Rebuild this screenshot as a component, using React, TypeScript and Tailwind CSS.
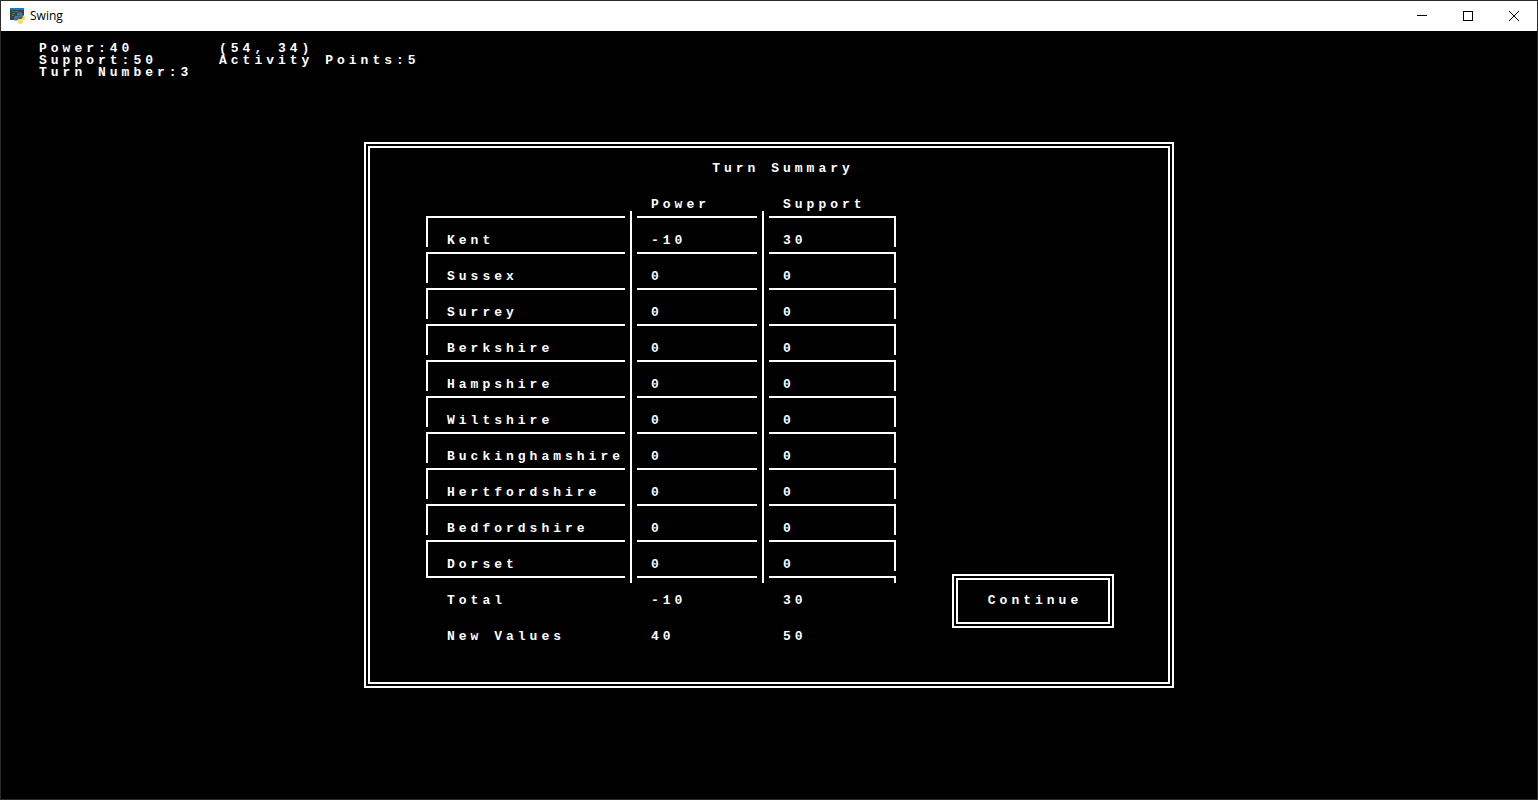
import React from "react";

type Frame = "none" | "full" | "close";

interface Row {
  label: string;
  power: string;
  support: string;
  frame: Frame;
}

const counties: [string, string, string][] = [
  ["Kent", "-10", "30"],
  ["Sussex", "0", "0"],
  ["Surrey", "0", "0"],
  ["Berkshire", "0", "0"],
  ["Hampshire", "0", "0"],
  ["Wiltshire", "0", "0"],
  ["Buckinghamshire", "0", "0"],
  ["Hertfordshire", "0", "0"],
  ["Bedfordshire", "0", "0"],
  ["Dorset", "0", "0"],
];

const rows: Row[] = [
  ...counties.map(([label, power, support]): Row => ({ label, power, support, frame: "full" })),
  { label: "Total", power: "-10", support: "30", frame: "close" },
  { label: "New Values", power: "40", support: "50", frame: "none" },
];

function AppIcon() {
  return (
    <svg viewBox="0 0 16 16" className="h-4 w-4" aria-hidden="true">
      <rect x="1" y="0" width="14" height="12" fill="#3c4043" />
      <rect x="1" y="0" width="14" height="2" fill="#0a7bd0" />
      <path d="M3 3.500h2M6 3.500h3M3 5.500h3M3 7.500h2" stroke="#3f8a4a" strokeWidth="1" />
      <path
        d="M10.600 4.300c-2.200 0-2.500.8-2.500 1.700v1.200h2.600v.5H7C5.600 7.700 5 8.800 5 10.200s.6 2.500 1.800 2.500h1v-1.300c0-1 .8-1.800 1.800-1.800H12c.8 0 1.400-.6 1.400-1.400V6c0-1.100-.9-1.700-2.800-1.700z"
        fill="#3b79ad"
      />
      <path
        d="M11.200 15.800c2.200 0 2.500-.8 2.500-1.700v-1.200h-2.600v-.5h3.200c1.200 0 1.700-1 1.700-2.300 0-1.400-.6-2.500-1.600-2.500h-.8v1.300c0 1-.8 1.900-1.800 1.900H9.800c-.8 0-1.400.6-1.400 1.400v1.900c0 1.100.9 1.700 2.800 1.700z"
        fill="#fbd85a"
      />
    </svg>
  );
}

function TitleBar() {
  const control = "flex h-[30px] w-[46px] items-center justify-center text-black";
  return (
    <header className="flex h-[30px] items-center bg-white pl-2">
      <AppIcon />
      <h1 className="ml-[5px] flex-1 font-['Open_Sans','Noto_Sans',sans-serif] text-[12px] leading-4 text-black">
        Swing
      </h1>
      <button type="button" aria-label="Minimize" className={control}>
        <svg width="10" height="10" shapeRendering="crispEdges" aria-hidden="true">
          <path d="M0 4.500h10" stroke="currentColor" />
        </svg>
      </button>
      <button type="button" aria-label="Maximize" className={control}>
        <svg width="10" height="10" shapeRendering="crispEdges" aria-hidden="true">
          <rect x="0.500" y="0.500" width="9" height="9" fill="none" stroke="currentColor" />
        </svg>
      </button>
      <button type="button" aria-label="Close" className={control}>
        <svg width="10" height="10" aria-hidden="true">
          <path d="M0 0l10 10M10 0l-10 10" stroke="currentColor" />
        </svg>
      </button>
    </header>
  );
}

function CellBody({ column, frame, text }: { column: 0 | 1 | 2; frame: Frame; text: string }) {
  const lined = frame !== "none";
  const side = column === 0 ? "border-l-2" : column === 2 ? "border-r-2" : "";
  const margin = column === 0 ? "mr-[5px]" : column === 1 ? "mx-[5px]" : "ml-[5px]";
  const bar = frame === "full" ? "h-9 bg-white" : frame === "close" ? "h-3 bg-white" : "h-9";
  const top = [
    lined ? "border-t-2 border-white" : "",
    frame === "full" ? `h-[19px] ${side}` : "h-[7px]",
    frame === "close" && column === 2 ? side : "",
  ].join(" ");
  const bottom = frame === "full" ? `${side} border-white` : `${side} border-transparent`;
  const stub = column === 0 && frame === "close";

  return (
    <div className="flex h-9">
      {column > 0 && <span className={`w-[2px] ${bar}`} />}
      <div className={`flex min-w-0 flex-1 flex-col justify-between ${margin}`}>
        <div className={`h-[5px] ${stub ? "w-[2px] bg-white" : ""}`} />
        <div className={top} />
        {frame !== "full" && <div className="h-3" />}
        <div className={`h-3 whitespace-nowrap ${column === 0 ? "pl-[19px]" : "pl-[14px]"} ${bottom}`}>{text}</div>
      </div>
    </div>
  );
}

function SummaryTable() {
  return (
    <table className="w-[470px] table-fixed border-collapse text-left" aria-label="Turn Summary">
      <colgroup>
        <col className="w-[204px]" />
        <col className="w-[132px]" />
        <col className="w-[134px]" />
      </colgroup>
      <thead>
        <tr>
          <td className="p-0" />
          <th scope="col" className="p-0">
            <CellBody column={1} frame="none" text="Power" />
          </th>
          <th scope="col" className="p-0">
            <CellBody column={2} frame="none" text="Support" />
          </th>
        </tr>
      </thead>
      <tbody>
        {rows.map((row) => (
          <tr key={row.label}>
            <th scope="row" className="p-0">
              <CellBody column={0} frame={row.frame} text={row.label} />
            </th>
            <td className="p-0">
              <CellBody column={1} frame={row.frame} text={row.power} />
            </td>
            <td className="p-0">
              <CellBody column={2} frame={row.frame} text={row.support} />
            </td>
          </tr>
        ))}
      </tbody>
    </table>
  );
}

export default function App() {
  return (
    <div className="flex min-h-screen flex-col border border-[#2b2b2b] bg-black">
      <TitleBar />
      <main className="flex-1 pt-3 font-['Liberation_Mono','DejaVu_Sans_Mono',monospace] text-[13px] font-bold leading-3 tracking-[4px] text-white">
        <section aria-label="Status" className="flex pl-[38px]">
          <div className="w-[180px] whitespace-nowrap">
            <p>Power:40</p>
            <p>Support:50</p>
            <p>Turn Number:3</p>
          </div>
          <div className="whitespace-nowrap">
            <p>(54, 34)</p>
            <p>Activity Points:5</p>
          </div>
        </section>

        <section className="mx-auto mt-[63px] w-[810px] max-w-full border-[6px] border-double border-white pb-[39px] pt-[15px]">
          <h2 className="pl-7 text-center">Turn Summary</h2>
          <div className="flex items-end justify-between pl-14 pr-[54px]">
            <SummaryTable />
            <button
              type="button"
              className="mb-[15px] h-[54px] w-[162px] border-[6px] border-double border-white pl-1"
            >
              Continue
            </button>
          </div>
        </section>
      </main>
    </div>
  );
}
